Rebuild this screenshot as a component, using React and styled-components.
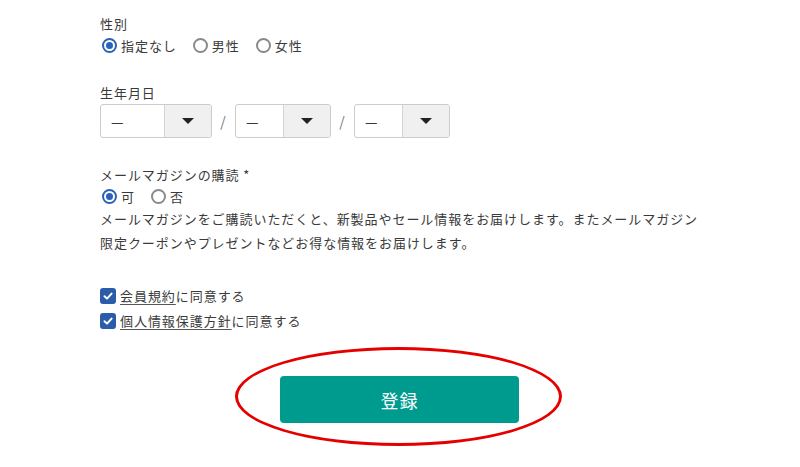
import React from "react";
import styled, { createGlobalStyle } from "styled-components";

const GlobalStyle = createGlobalStyle`
  body {
    margin: 0;
    background: #ffffff;
    font-family: "Noto Sans CJK JP", "Noto Sans", sans-serif;
    color: #3a3a3a;
  }
`;

const StyledPage = styled.div`
  width: 800px;
  height: 467px;
  overflow: hidden;
  padding: 14px 0 0 100px;
  box-sizing: border-box;
  font-size: 13px;
  letter-spacing: 0.95px;
`;

const StyledSection = styled.div`
  margin-top: ${(props) => props.gap || 0}px;
`;

const StyledLabel = styled.div`
  height: 20px;
  line-height: 20px;
`;

const StyledRadioRow = styled.div`
  display: flex;
  align-items: center;
  height: 22px;
  gap: 14px;
`;

const StyledOption = styled.label`
  display: flex;
  align-items: center;
  gap: 4px;
`;

const StyledRadio = styled.span`
  width: 15px;
  height: 15px;
  box-sizing: border-box;
  border-radius: 50%;
  border: 2px solid ${(props) => (props.checked ? "#2a62b8" : "#8a8a8a")};
  display: flex;
  align-items: center;
  justify-content: center;
  margin-left: 2px;

  &::after {
    content: "";
    width: 7px;
    height: 7px;
    border-radius: 50%;
    background: #2a62b8;
    display: ${(props) => (props.checked ? "block" : "none")};
  }
`;

const StyledDateRow = styled.div`
  display: flex;
  align-items: center;
  margin-top: 1px;
`;

const StyledSelect = styled.div`
  display: flex;
  width: ${(props) => props.width}px;
  height: 34px;
  box-sizing: border-box;
  border: 1px solid #cccccc;
  border-radius: 3px;
  overflow: hidden;
`;

const StyledValue = styled.div`
  flex: 1;
  display: flex;
  align-items: center;
  padding-left: 10px;
  font-size: 14px;
`;

const StyledArrow = styled.div`
  width: 46px;
  background: #f0f0f0;
  border-left: 1px solid #d4d4d4;
  display: flex;
  align-items: center;
  justify-content: center;

  &::after {
    content: "";
    border-left: 6px solid transparent;
    border-right: 6px solid transparent;
    border-top: 6px solid #222222;
  }
`;

const StyledSlash = styled.span`
  width: 23px;
  text-align: center;
  color: #777777;
  font-size: 14px;
`;

const StyledText = styled.p`
  margin: 0;
  line-height: 24px;
`;

const StyledCheckRow = styled.label`
  display: flex;
  align-items: center;
  height: 25px;
  gap: 4px;
`;

const StyledCheckbox = styled.span`
  width: 16px;
  height: 16px;
  border-radius: 3px;
  background: #2a5caa;
  display: flex;
  align-items: center;
  justify-content: center;
`;

const StyledLink = styled.a`
  color: #3a3a3a;
  text-decoration: underline;
  text-underline-offset: 3px;
  text-decoration-color: #555555;
`;

const StyledButtonWrap = styled.div`
  position: relative;
  width: 239px;
  margin: 43px 0 0 180px;
`;

const StyledButton = styled.button`
  width: 239px;
  height: 47px;
  border: none;
  border-radius: 4px;
  background: #009b8f;
  color: #ffffff;
  font-family: "Noto Sans CJK JP", sans-serif;
  font-size: 18px;
  letter-spacing: 1px;
`;

const StyledEllipse = styled.span`
  position: absolute;
  left: -45px;
  top: -29px;
  width: 327px;
  height: 99px;
  box-sizing: border-box;
  border: 3px solid #e50000;
  border-radius: 50%;
  pointer-events: none;
`;

const Radio = ({ checked, children }) => (
  <StyledOption>
    <StyledRadio checked={checked} />
    <span>{children}</span>
  </StyledOption>
);

const Select = ({ width }) => (
  <StyledSelect width={width}>
    <StyledValue>—</StyledValue>
    <StyledArrow />
  </StyledSelect>
);

const Check = () => (
  <StyledCheckbox>
    <svg width="12" height="12" viewBox="0 0 12 12">
      <path d="M2.5 6.2 L5 8.6 L9.6 3.6" fill="none" stroke="#fff" strokeWidth="2" strokeLinecap="round" strokeLinejoin="round" />
    </svg>
  </StyledCheckbox>
);

const App = () => {
  return (
    <StyledPage>
      <GlobalStyle />
      <StyledSection>
        <StyledLabel>性別</StyledLabel>
        <StyledRadioRow>
          <Radio checked>指定なし</Radio>
          <Radio>男性</Radio>
          <Radio>女性</Radio>
        </StyledRadioRow>
      </StyledSection>

      <StyledSection gap={27}>
        <StyledLabel>生年月日</StyledLabel>
        <StyledDateRow>
          <Select width={112} />
          <StyledSlash>/</StyledSlash>
          <Select width={96} />
          <StyledSlash>/</StyledSlash>
          <Select width={96} />
        </StyledDateRow>
      </StyledSection>

      <StyledSection gap={27}>
        <StyledLabel>メールマガジンの購読 *</StyledLabel>
        <StyledRadioRow>
          <Radio checked>可</Radio>
          <Radio>否</Radio>
        </StyledRadioRow>
        <StyledText>
          メールマガジンをご購読いただくと、新製品やセール情報をお届けします。またメールマガジン
          <br />
          限定クーポンやプレゼントなどお得な情報をお届けします。
        </StyledText>
      </StyledSection>

      <StyledSection gap={28}>
        <StyledCheckRow>
          <Check />
          <span>
            <StyledLink>会員規約</StyledLink>に同意する
          </span>
        </StyledCheckRow>
        <StyledCheckRow>
          <Check />
          <span>
            <StyledLink>個人情報保護方針</StyledLink>に同意する
          </span>
        </StyledCheckRow>
      </StyledSection>

      <StyledButtonWrap>
        <StyledEllipse />
        <StyledButton>登録</StyledButton>
      </StyledButtonWrap>
    </StyledPage>
  );
};

export default App;
